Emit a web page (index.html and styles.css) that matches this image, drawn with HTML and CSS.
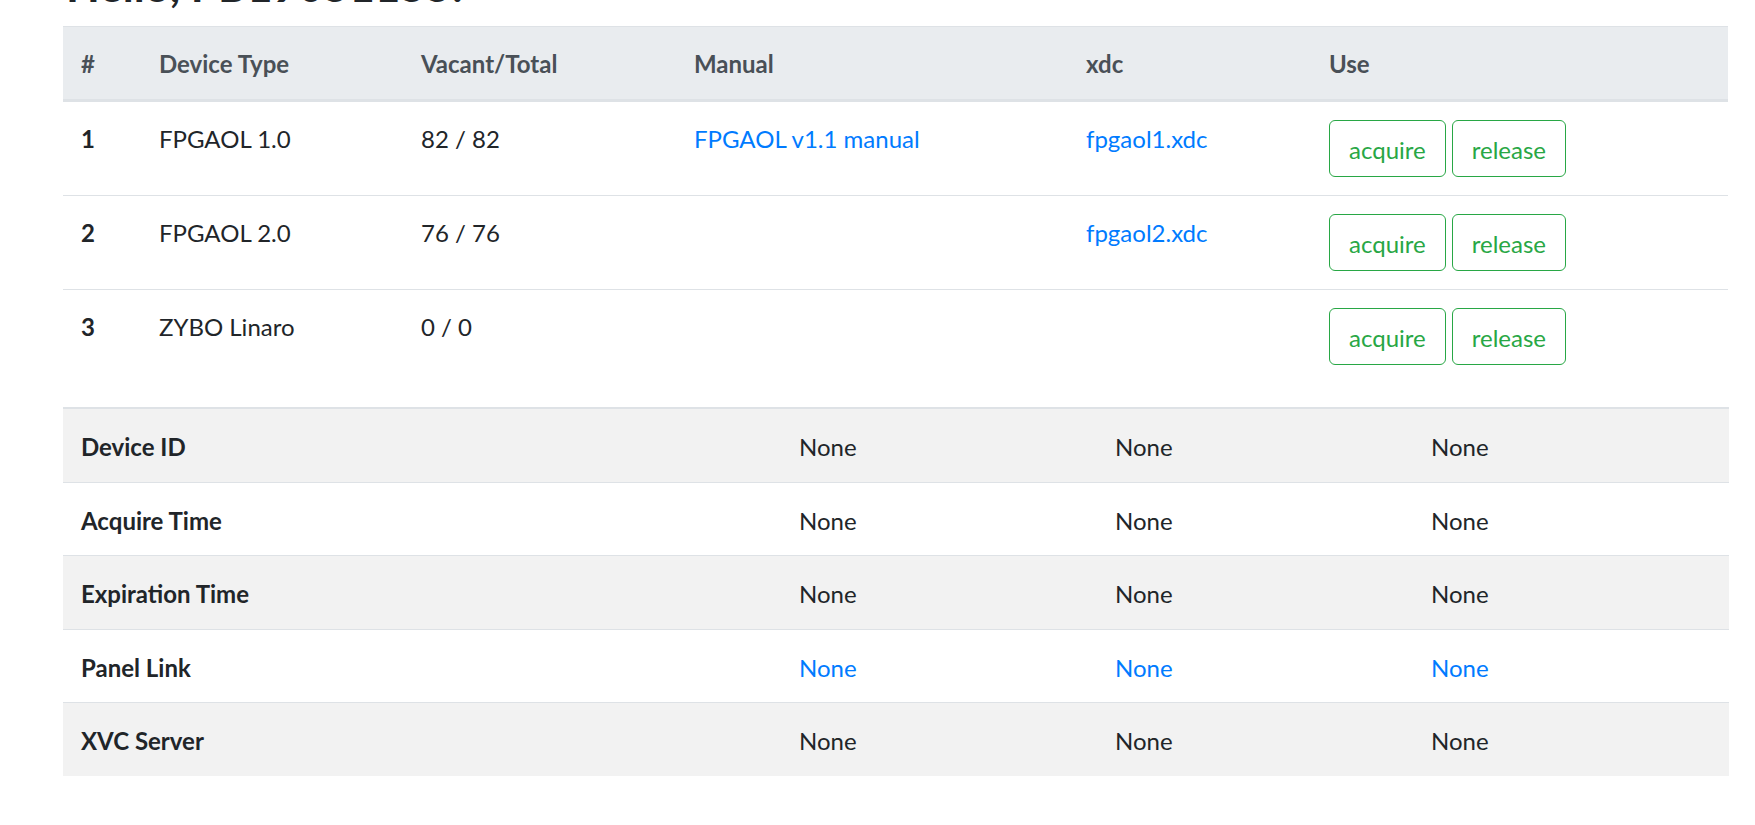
FILE: index.html
```html
<!DOCTYPE html>
<html lang="en">
<head>
<meta charset="utf-8">
<title>FPGAOL</title>
<link rel="stylesheet" href="styles.css">
</head>
<body>
<main class="page">
  <h2 class="greeting">Hello, PB19051155!</h2>

  <table class="table devices">
    <colgroup>
      <col class="c-num"><col class="c-type"><col class="c-vac"><col class="c-man"><col class="c-xdc"><col class="c-use">
    </colgroup>
    <thead>
      <tr>
        <th>#</th>
        <th>Device Type</th>
        <th>Vacant/Total</th>
        <th>Manual</th>
        <th>xdc</th>
        <th>Use</th>
      </tr>
    </thead>
    <tbody>
      <tr>
        <th class="rowhead">1</th>
        <td>FPGAOL 1.0</td>
        <td>82 / 82</td>
        <td><a href="#">FPGAOL v1.1 manual</a></td>
        <td><a href="#">fpgaol1.xdc</a></td>
        <td class="actions"><button class="btn">acquire</button><button class="btn">release</button></td>
      </tr>
      <tr>
        <th class="rowhead">2</th>
        <td>FPGAOL 2.0</td>
        <td>76 / 76</td>
        <td></td>
        <td><a href="#">fpgaol2.xdc</a></td>
        <td class="actions"><button class="btn">acquire</button><button class="btn">release</button></td>
      </tr>
      <tr>
        <th class="rowhead">3</th>
        <td>ZYBO Linaro</td>
        <td>0 / 0</td>
        <td></td>
        <td></td>
        <td class="actions"><button class="btn">acquire</button><button class="btn">release</button></td>
      </tr>
    </tbody>
  </table>

  <table class="table status">
    <colgroup>
      <col class="s-label"><col class="s-val"><col class="s-val"><col class="s-val">
    </colgroup>
    <tbody>
      <tr class="odd">
        <th>Device ID</th><td>None</td><td>None</td><td>None</td>
      </tr>
      <tr>
        <th>Acquire Time</th><td>None</td><td>None</td><td>None</td>
      </tr>
      <tr class="odd">
        <th>Expiration Time</th><td>None</td><td>None</td><td>None</td>
      </tr>
      <tr>
        <th>Panel Link</th><td><a href="#">None</a></td><td><a href="#">None</a></td><td><a href="#">None</a></td>
      </tr>
      <tr class="odd">
        <th>XVC Server</th><td>None</td><td>None</td><td>None</td>
      </tr>
    </tbody>
  </table>
</main>
</body>
</html>
```

FILE: styles.css
```css
html, body {
  margin: 0;
  padding: 0;
  background: #fff;
}

body {
  font-family: Lato, "Open Sans", "Liberation Sans", sans-serif;
  font-size: 24px;
  line-height: 36px;
  color: #212529;
}

.page {
  padding: 0 27px 0 63px;
  overflow: hidden;
}

.greeting {
  font-size: 44px;
  font-weight: 700;
  line-height: 54px;
  margin: -42px 0 14px 3px;
  color: #212529;
}

.table {
  width: 1665px;
  border-collapse: collapse;
  table-layout: fixed;
  margin: 0 0 24px 0;
}

.table th,
.table td {
  padding: 19px 18px 17px 18px;
  border-top: 1px solid #dee2e6;
  text-align: left;
  vertical-align: top;
}

.table th {
  font-weight: 700;
}

.devices thead th {
  background: #e9ecef;
  color: #495057;
  border-bottom: 3px solid #dee2e6;
  vertical-align: bottom;
}

.devices .actions {
  padding-top: 18px;
  padding-bottom: 18px;
}

.c-num { width: 78px; }
.c-type { width: 262px; }
.c-vac { width: 273px; }
.c-man { width: 392px; }
.c-xdc { width: 243px; }
.c-use { width: 417px; }

.s-label { width: 718px; }
.s-val { width: 316px; }

.status th,
.status td {
  padding-top: 20.25px;
  padding-bottom: 16.25px;
}

.status tbody tr:first-child th,
.status tbody tr:first-child td {
  border-top: 2px solid #dee2e6;
}

a {
  color: #007bff;
  text-decoration: none;
}

.actions {
  white-space: nowrap;
}

.btn {
  display: inline-block;
  font-family: inherit;
  font-size: 24px;
  line-height: 36px;
  padding: 10.5px 19px 8.5px 19px;
  margin: 0 6px 0 0;
  color: #28a745;
  background: transparent;
  border: 1px solid #28a745;
  border-radius: 6px;
  vertical-align: top;
  cursor: pointer;
}

.status .odd th,
.status .odd td {
  background: #f2f2f2;
}
```
